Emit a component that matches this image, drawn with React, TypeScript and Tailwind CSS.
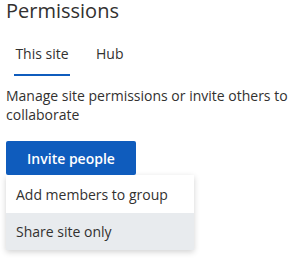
export default function App() {
  return (
    <div
      className="w-[300px] h-[264px] bg-white overflow-hidden text-[#323130]"
      style={{ fontFamily: '"Segoe UI", "Open Sans", sans-serif' }}
    >
      <div className="pl-[6px]">
        <h1 className="text-[20px] leading-[22px] font-medium">Permissions</h1>
        <div className="flex mt-[20px] ml-[8px] gap-[20px] text-[14px]">
          <div className="flex flex-col items-center">
            <span className="leading-[24px] px-[1px]">This site</span>
            <div className="mt-[8px] h-[2px] w-[56px] bg-[#0f5cbd]" />
          </div>
          <span className="leading-[24px] px-[6px]">Hub</span>
        </div>
        <p className="mt-[10px] text-[14px] leading-[19px] pr-[8px]">
          Manage site permissions or invite others to collaborate
        </p>
        <button className="mt-[17px] h-[34px] w-[130px] bg-[#0f5cbd] text-white text-[14px] font-semibold rounded-[2px]">
          Invite people
        </button>
        <div className="w-[188px] bg-white shadow-[0_2px_6px_rgba(0,0,0,0.18)] text-[14px]">
          <div className="h-[38px] flex items-center px-[10px]">Add members to group</div>
          <div className="h-[37px] flex items-center px-[10px] bg-[#e8ebee]">Share site only</div>
        </div>
      </div>
    </div>
  );
}
